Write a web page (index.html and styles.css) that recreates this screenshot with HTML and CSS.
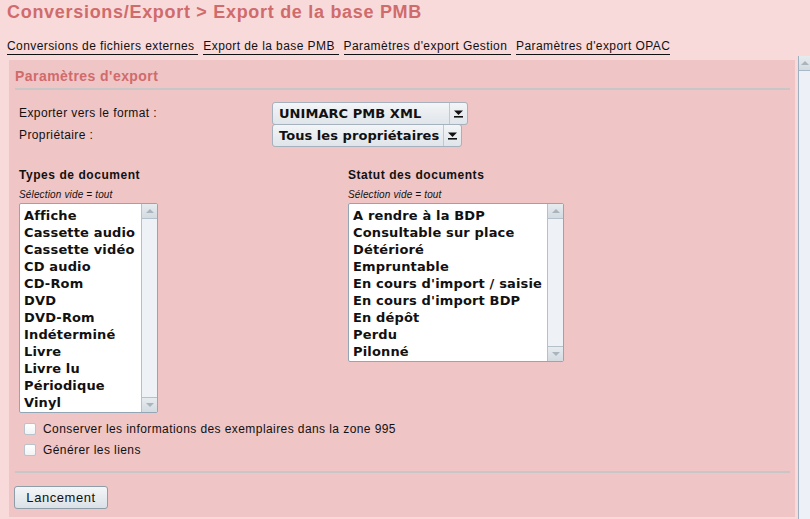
FILE: index.html
```html
<!DOCTYPE html>
<html lang="fr">
<head>
<meta charset="utf-8">
<title>Export de la base PMB</title>
<link rel="stylesheet" href="styles.css">
</head>
<body>
<h1 class="title">Conversions/Export &gt; Export de la base PMB</h1>
<nav class="tabs">
  <a class="tab" href="#">Conversions de fichiers externes </a>
  <a class="tab" href="#">Export de la base PMB </a>
  <a class="tab" href="#">Paramètres d'export Gestion </a>
  <a class="tab" href="#">Paramètres d'export OPAC</a>
</nav>
<div class="frame">
  <main class="panel">
    <h2 class="panel-title">Paramètres d'export</h2>
    <div class="formgrid">
      <div class="label">Exporter vers le format :</div>
      <div class="select sel1"><span class="sel-text">UNIMARC PMB XML</span><span class="sel-arrow"><svg width="9" height="9" viewBox="0 0 9 9"><path d="M0 1.5h9L4.5 6z" fill="#111"/><rect x="0" y="7" width="9" height="1.6" fill="#111"/></svg></span></div>
      <div class="label">Propriétaire :</div>
      <div class="select sel2"><span class="sel-text">Tous les propriétaires</span><span class="sel-arrow"><svg width="9" height="9" viewBox="0 0 9 9"><path d="M0 1.5h9L4.5 6z" fill="#111"/><rect x="0" y="7" width="9" height="1.6" fill="#111"/></svg></span></div>
    </div>
    <div class="columns">
      <section class="col col-left">
        <h3 class="col-title">Types de document</h3>
        <div class="hint">Sélection vide = tout</div>
        <div class="listbox lb1">
          <ul class="items">
            <li>Affiche</li><li>Cassette audio</li><li>Cassette vidéo</li><li>CD audio</li><li>CD-Rom</li><li>DVD</li><li>DVD-Rom</li><li>Indéterminé</li><li>Livre</li><li>Livre lu</li><li>Périodique</li><li>Vinyl</li>
          </ul>
          <div class="vscroll"><span class="sbtn up"></span><span class="strack"></span><span class="sbtn down"></span></div>
        </div>
      </section>
      <section class="col col-right">
        <h3 class="col-title">Statut des documents</h3>
        <div class="hint">Sélection vide = tout</div>
        <div class="listbox lb2">
          <ul class="items">
            <li>A rendre à la BDP</li><li>Consultable sur place</li><li>Détérioré</li><li>Empruntable</li><li>En cours d'import / saisie</li><li>En cours d'import BDP</li><li>En dépôt</li><li>Perdu</li><li>Pilonné</li>
          </ul>
          <div class="vscroll"><span class="sbtn up"></span><span class="strack"></span><span class="sbtn down"></span></div>
        </div>
      </section>
    </div>
    <label class="check"><span class="box"></span>Conserver les informations des exemplaires dans la zone 995</label>
    <label class="check"><span class="box"></span>Générer les liens</label>
    <div class="sep"></div>
    <button class="btn" type="button">Lancement</button>
  </main>
  <div class="pagescroll"><span class="pbtn"></span></div>
</div>
</body>
</html>
```
FILE: styles.css
```css
html, body {
  margin: 0;
  padding: 0;
  height: 519px;
  overflow: hidden;
}
body {
  background: #f8dadb;
  font-family: "Liberation Sans", Arial, sans-serif;
  color: #111;
}
.title {
  margin: 0;
  padding: 1px 0 0 7px;
  height: 24px;
  font-size: 18px;
  line-height: 22px;
  font-weight: bold;
  letter-spacing: 0.7px;
  color: #d06b6c;
}
.tabs {
  display: flex;
  gap: 5px;
  padding: 14px 0 0 7px;
  height: 17px;
}
.tab {
  font-size: 12px;
  line-height: 15px;
  letter-spacing: 0.42px;
  color: #111;
  text-decoration: none;
  border-bottom: 1px solid #111;
  height: 15px;
  white-space: pre;
}
.frame {
  display: flex;
  gap: 3px;
  height: 464px;
  padding-left: 9px;
}
.panel {
  flex: 1;
  margin-top: 4px;
  height: 457px;
  background: #efc5c6;
  padding: 0 5px 0 6px;
  box-sizing: border-box;
}
.panel-title {
  margin: 0;
  height: 30px;
  padding-top: 6px;
  box-sizing: border-box;
  font-size: 14px;
  line-height: 20px;
  font-weight: bold;
  letter-spacing: 0.45px;
  color: #d06b6c;
  border-bottom: 2px solid #c9c6c8;
}
.formgrid {
  display: grid;
  grid-template-columns: 253px auto;
  grid-auto-rows: 22px;
  justify-items: start;
  align-items: start;
  margin-top: 12px;
  padding-left: 4px;
}
.label {
  font-size: 12px;
  line-height: 22px;
  letter-spacing: 0.4px;
}
.select {
  display: flex;
  align-items: center;
  height: 23px;
  box-sizing: border-box;
  border: 1px solid #a5b1bc;
  border-radius: 3px;
  background: linear-gradient(#f3f5f7, #dfe5ea);
  font-family: "DejaVu Sans", sans-serif;
  font-weight: bold;
  font-size: 13px;
  letter-spacing: 0.05px;
}
.sel1 { width: 196px; }
.sel2 { width: 190px; }
.sel-text {
  flex: 1;
  padding-left: 6px;
  white-space: nowrap;
}
.sel-arrow {
  display: flex;
  align-items: center;
  justify-content: center;
  width: 17px;
  height: 21px;
  border-left: 1px solid #c0c9d0;
}
.columns {
  display: flex;
  margin-top: 22px;
  padding-left: 4px;
}
.col-left { width: 329px; }
.col-title {
  margin: 0;
  font-size: 12px;
  line-height: 15px;
  font-weight: bold;
  letter-spacing: 0.55px;
}
.hint {
  margin-top: 6px;
  font-size: 10px;
  line-height: 12px;
  font-style: italic;
  letter-spacing: 0.15px;
}
.listbox {
  display: flex;
  margin-top: 2px;
  box-sizing: border-box;
  border: 1px solid #93a6b6;
  border-radius: 2px;
  background: #fff;
}
.lb1 { width: 139px; height: 210px; }
.lb2 { width: 216px; height: 159px; }
.items {
  flex: 1;
  list-style: none;
  margin: 0;
  padding: 3px 0 0 4px;
  font-family: "DejaVu Sans", sans-serif;
  font-weight: bold;
  font-size: 13px;
  line-height: 17px;
  letter-spacing: 0.15px;
  white-space: nowrap;
  overflow: hidden;
}
.vscroll {
  width: 15px;
  display: flex;
  flex-direction: column;
  background: #eef2f6;
  border-left: 1px solid #b4c1cb;
}
.sbtn {
  height: 15px;
  position: relative;
  background: linear-gradient(#e6ebef, #d3dbe1);
  box-sizing: border-box;
}
.sbtn.up { border-bottom: 1px solid #b4c1cb; }
.sbtn.down { border-top: 1px solid #b4c1cb; }
.sbtn::after {
  content: "";
  position: absolute;
  left: 4px;
  top: 5px;
  border-left: 4px solid transparent;
  border-right: 4px solid transparent;
}
.sbtn.up::after { border-bottom: 4px solid #a9b4bc; }
.sbtn.down::after { border-top: 4px solid #a9b4bc; }
.strack { flex: 1; }
.check {
  display: flex;
  align-items: center;
  gap: 7px;
  height: 21px;
  padding-left: 9px;
  font-size: 12px;
  letter-spacing: 0.42px;
}
.check:first-of-type { margin-top: 5px; }
.box {
  width: 12px;
  height: 12px;
  box-sizing: border-box;
  border: 1px solid #b8c3cc;
  border-radius: 2px;
  background: linear-gradient(#fff, #f1f3f5);
}
.sep {
  margin-top: 11px;
  height: 2px;
  background: #c9c6c8;
}
.btn {
  display: block;
  margin-top: 13px;
  margin-left: -1px;
  width: 94px;
  height: 23px;
  border: 1px solid #8e9ea9;
  border-radius: 3px;
  background: linear-gradient(#f4f6f8, #dae1e6);
  font-family: "Liberation Sans", Arial, sans-serif;
  font-size: 13px;
  letter-spacing: 0.55px;
  color: #111;
  padding: 0;
}
.pagescroll {
  width: 12px;
  height: 464px;
  background: #edf1f7;
  border-left: 1px solid #9fb0c0;
  box-sizing: border-box;
}
.pbtn {
  display: block;
  height: 15px;
  position: relative;
  background: linear-gradient(#e6ebef, #d3dbe1);
  border-bottom: 1px solid #a9b8c4;
  box-sizing: border-box;
}
.pbtn::after {
  content: "";
  position: absolute;
  left: 2px;
  top: 5px;
  border-left: 4px solid transparent;
  border-right: 4px solid transparent;
  border-bottom: 4px solid #a9b4bc;
}
```
